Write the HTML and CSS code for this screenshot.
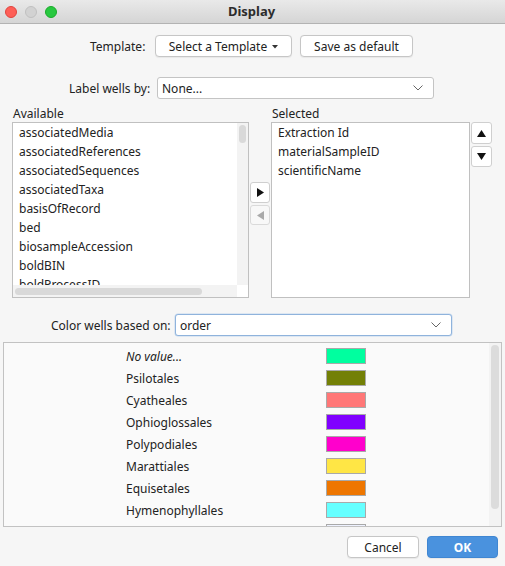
FILE: index.html
```html
<!DOCTYPE html>
<html>
<head>
<meta charset="utf-8">
<link rel="stylesheet" href="styles.css">
</head>
<body>
<div class="window">
  <div class="titlebar">
    <div class="lights">
      <span class="light red"></span>
      <span class="light gray"></span>
      <span class="light green"></span>
    </div>
    <div class="title">Display</div>
  </div>

  <div class="row-template">
    <span class="lbl">Template:</span>
    <button class="btn btn-template">Select a Template <svg class="caret" width="6" height="4" viewBox="0 0 6 4"><path d="M0 0h6L3 3.5z" fill="#333"/></svg></button>
    <button class="btn btn-save">Save as default</button>
  </div>

  <div class="row-label">
    <span class="lbl">Label wells by:</span>
    <div class="select select-label">
      <span>None...</span>
      <svg class="chev" width="10" height="6" viewBox="0 0 10 6"><path d="M0.5 0.5L5 5L9.5 0.5" fill="none" stroke="#666" stroke-width="1"/></svg>
    </div>
  </div>

  <div class="lists">
    <div class="col col-avail">
      <div class="col-title">Available</div>
      <div class="listbox avail">
        <div class="items">
          <div class="item">associatedMedia</div>
          <div class="item">associatedReferences</div>
          <div class="item">associatedSequences</div>
          <div class="item">associatedTaxa</div>
          <div class="item">basisOfRecord</div>
          <div class="item">bed</div>
          <div class="item">biosampleAccession</div>
          <div class="item">boldBIN</div>
          <div class="item">boldProcessID</div>
          <div class="item">catalogNumber</div>
        </div>
        <div class="vtrack"><div class="vthumb"></div></div>
        <div class="htrack"><div class="hthumb"></div></div>
        <div class="corner"></div>
      </div>
    </div>
    <div class="col col-move">
      <button class="sbtn move-right"><svg width="7" height="9" viewBox="0 0 7 9"><path d="M0 0L7 4.5L0 9z" fill="#111"/></svg></button>
      <button class="sbtn move-left"><svg width="7" height="9" viewBox="0 0 7 9"><path d="M7 0L0 4.5L7 9z" fill="#aaa"/></svg></button>
    </div>
    <div class="col col-sel">
      <div class="col-title">Selected</div>
      <div class="listbox sel">
        <div class="item">Extraction Id</div>
        <div class="item">materialSampleID</div>
        <div class="item">scientificName</div>
      </div>
    </div>
    <div class="col col-order">
      <button class="sbtn updown"><svg width="9" height="7" viewBox="0 0 9 7"><path d="M0 7L4.5 0L9 7z" fill="#111"/></svg></button>
      <button class="sbtn updown"><svg width="9" height="7" viewBox="0 0 9 7"><path d="M0 0L4.5 7L9 0z" fill="#111"/></svg></button>
    </div>
  </div>

  <div class="row-color">
    <span class="lbl">Color wells based on:</span>
    <div class="select select-color">
      <span>order</span>
      <svg class="chev" width="10" height="6" viewBox="0 0 10 6"><path d="M0.5 0.5L5 5L9.5 0.5" fill="none" stroke="#666" stroke-width="1"/></svg>
    </div>
  </div>

  <div class="colorlist">
    <div class="crows">
      <div class="crow"><span class="cname italic">No value...</span><span class="swatch" style="background:#00ff9f"></span></div>
      <div class="crow"><span class="cname">Psilotales</span><span class="swatch" style="background:#738006"></span></div>
      <div class="crow"><span class="cname">Cyatheales</span><span class="swatch" style="background:#ff7777"></span></div>
      <div class="crow"><span class="cname">Ophioglossales</span><span class="swatch" style="background:#8000ff"></span></div>
      <div class="crow"><span class="cname">Polypodiales</span><span class="swatch" style="background:#ff00cc"></span></div>
      <div class="crow"><span class="cname">Marattiales</span><span class="swatch" style="background:#ffe645"></span></div>
      <div class="crow"><span class="cname">Equisetales</span><span class="swatch" style="background:#ee7600"></span></div>
      <div class="crow"><span class="cname">Hymenophyllales</span><span class="swatch" style="background:#66ffff"></span></div>
      <div class="crow"><span class="cname">Gleicheniales</span><span class="swatch" style="background:#eef2ff"></span></div>
    </div>
    <div class="ctrack"><div class="cthumb"></div></div>
  </div>

  <div class="footer">
    <button class="btn btn-cancel">Cancel</button>
    <button class="btn btn-ok">OK</button>
  </div>
</div>
</body>
</html>
```

FILE: styles.css
```css
* { box-sizing: border-box; }
html, body { margin: 0; padding: 0; }
body {
  width: 505px;
  height: 566px;
  overflow: hidden;
  background: #f6f6f6;
  font-family: "Noto Sans", "Open Sans", sans-serif;
  font-size: 12px;
  color: #222;
}
.window { width: 505px; height: 566px; display: flex; flex-direction: column; }

.titlebar {
  height: 24px;
  flex: none;
  background: linear-gradient(#e9e9e9, #d5d5d5);
  border-bottom: 1px solid #b3b3b3;
  display: flex;
  align-items: center;
  position: relative;
}
.lights { display: flex; gap: 8px; padding-left: 5px; align-items: center; }
.light { width: 12px; height: 12px; border-radius: 50%; display: block; }
.red { background: #fe5f57; border: 0.5px solid #e0443e; }
.gray { background: #d2d2d2; border: 0.5px solid #c0c0c0; }
.green { background: #28c840; border: 0.5px solid #1aab29; }
.title {
  flex: 1;
  text-align: center;
  font-weight: bold;
  font-size: 13px;
  color: #2c2c2c;
  margin-right: 59px;
  margin-top: -2px;
}

.btn {
  font-family: inherit;
  font-size: 12px;
  color: #222;
  background: #fff;
  border: 1px solid #c6c6c6;
  border-radius: 4px;
  height: 22px;
  padding: 0;
  box-shadow: 0 0.5px 1px rgba(0,0,0,0.06);
  display: flex;
  align-items: center;
  justify-content: center;
}

.row-template {
  margin-top: 11px;
  height: 22px;
  display: flex;
  align-items: center;
  padding-left: 90px;
}
.row-template .lbl { width: 65px; }
.btn-template { width: 137px; gap: 5px; }
.caret { margin-top: 1px; }
.btn-save { width: 113px; margin-left: 8px; }

.row-label {
  margin-top: 20px;
  height: 22px;
  display: flex;
  align-items: center;
  padding-left: 69px;
}
.row-label .lbl { width: 88px; }
.select {
  height: 22px;
  background: #fff;
  border: 1px solid #c4c4c4;
  border-radius: 3px;
  display: flex;
  align-items: center;
  justify-content: space-between;
  padding: 0 10px 0 4px;
}
.select-label { width: 277px; }

.lists {
  margin-top: 7px;
  display: flex;
  padding-left: 12px;
}
.col { display: flex; flex-direction: column; }
.col-title { height: 16px; line-height: 16px; padding-left: 1px; }
.col-avail { width: 237px; }
.col-move { width: 20px; margin-left: 1px; padding-top: 76px; gap: 2px; }
.col-sel { width: 199px; margin-left: 1px; }
.col-order { width: 21px; margin-left: 1px; padding-top: 16px; gap: 2px; }

.listbox {
  height: 176px;
  background: #fff;
  border: 1px solid #c0c0c0;
}
.item { height: 19px; line-height: 19px; padding-left: 6px; white-space: nowrap; }

.avail {
  display: grid;
  grid-template-columns: 1fr 11px;
  grid-template-rows: 1fr 12px;
  overflow: hidden;
}
.avail .items { overflow: hidden; grid-column: 1; grid-row: 1; }
.vtrack { grid-column: 2; grid-row: 1; background: #f3f3f3; padding: 2px 1px 0 2px; }
.vthumb { height: 18px; background: #d9d9d9; border-radius: 4px; width: 7px; }
.htrack { grid-column: 1; grid-row: 2; background: #f3f3f3; padding: 3px 0 0 2px; }
.hthumb { width: 187px; height: 7px; background: #d9d9d9; border-radius: 4px; }
.corner { grid-column: 2; grid-row: 2; background: #fff; }

.sel { padding: 0; }

.sbtn {
  background: #fff;
  border: 1px solid #cfcfcf;
  border-radius: 3px;
  padding: 0;
  display: flex;
  align-items: center;
  justify-content: center;
}
.move-right { height: 21px; }
.move-left { height: 20px; background: #f8f8f8; border-color: #dadada; }
.updown { height: 22px; }
.updown + .updown { height: 21px; }

.row-color {
  margin-top: 16px;
  height: 22px;
  display: flex;
  align-items: center;
  padding-left: 51px;
}
.row-color .lbl { width: 124px; }
.select-color {
  width: 277px;
  border-color: #8fb3dc;
  box-shadow: 0 0 0 0.5px #c3d7ee;
}

.colorlist {
  margin: 6px 3px 0 3px;
  height: 185px;
  background: #fafafa;
  border: 1px solid #c2c2c2;
  display: flex;
  overflow: hidden;
}
.crows { flex: 1; padding-top: 2px; overflow: hidden; }
.crow {
  height: 22px;
  display: flex;
  align-items: center;
  padding-left: 122px;
}
.cname { width: 200px; }
.italic { font-style: italic; }
.swatch {
  width: 40px;
  height: 16px;
  border: 1px solid #a9a9a9;
  display: block;
}
.ctrack { width: 12px; background: #f3f3f3; padding: 2px 2px 0 2px; }
.cthumb { height: 164px; background: #dcdcdc; border-radius: 4px; }

.footer {
  margin-top: 9px;
  display: flex;
  justify-content: flex-end;
  gap: 8px;
  padding-right: 7px;
}
.btn-cancel { width: 72px; }
.btn-ok {
  width: 71px;
  background: #4a92de;
  border-color: #3f86d2;
  color: #fff;
  font-weight: bold;
}
```
